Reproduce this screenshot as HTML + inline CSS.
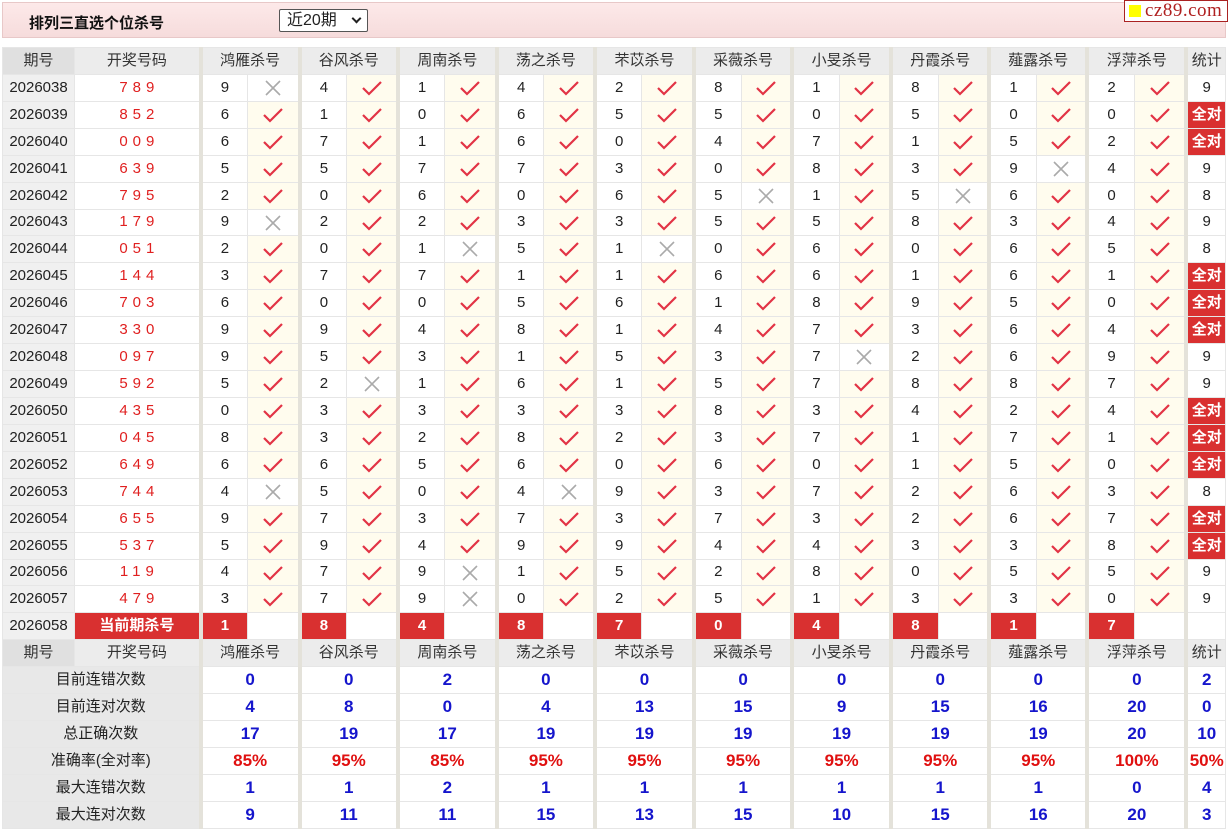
<!DOCTYPE html>
<html><head><meta charset="utf-8">
<style>
*{margin:0;padding:0;box-sizing:border-box}
body{width:1228px;height:828px;overflow:hidden;background:#fff;font-family:"Liberation Sans","Noto Sans CJK SC",sans-serif;color:#222}
.top{position:absolute;left:2px;top:2px;width:1224px;height:36px;background:linear-gradient(#fde9e9,#f6dcdc);border:1px solid #e8c8c8}
.top b{position:absolute;left:26px;top:9px;font-size:15px;color:#111}
.sel{position:absolute;left:276px;top:6px;width:89px;height:23px;border:1px solid #555;background:#fff;font-size:16px;padding-left:7px;line-height:21px;border-radius:2px}
.sel i{position:absolute;right:7px;top:5px;width:7px;height:7px;border-right:2px solid #222;border-bottom:2px solid #222;transform:rotate(45deg)}
.logo{position:absolute;left:1124px;top:0;width:104px;height:22px;background:#fff;border:1px solid #a22;font-family:"Liberation Serif",serif;font-size:19px;color:#b02020;line-height:20px;padding-left:20px;letter-spacing:0.5px}
.logo:before{content:"";position:absolute;left:4px;top:4px;width:12px;height:12px;background:#ff0}
table{position:absolute;left:2px;top:47px;width:1224px;border-collapse:collapse;table-layout:fixed}
td{height:26.93px;border:1px solid #e6e6e6;text-align:center;font-size:15px;padding:0;line-height:24px;white-space:nowrap;overflow:hidden}
tr.h td{background:#ececec;color:#333}
td.q{background:#f0f0f0}
tr.h td.q{background:#e0e0e0}
td.d{color:#e02020;letter-spacing:5px;padding-left:5px}
td.n{border-left:4px solid #e4e2da}
td.g{border-left:4px solid #e4e2da}
td.k{background:#fffcee}
td.k svg,td.x svg{vertical-align:middle}
td.r{background:#d93030;color:#fff;font-weight:bold}
td.L{background:#e8e8e8;color:#222}
td.v{color:#1515cc;font-weight:bold;font-size:17px}
td.p{color:#e01010;font-weight:bold;font-size:17px}
</style></head><body>
<svg width="0" height="0" style="position:absolute"><defs>
<symbol id="c" viewBox="0 0 22 16"><path d="M2 8 L8 14 L20 2" fill="none" stroke="#e23345" stroke-width="2.2"/></symbol>
<symbol id="x" viewBox="0 0 18 18"><path d="M2 2 L16 16 M16 2 L2 16" fill="none" stroke="#aaa" stroke-width="1.6"/></symbol>
</defs></svg>
<div class="top"><b>排列三直选个位杀号</b><div class="sel">近20期<i></i></div></div>
<div class="logo">cz89.com</div>
<table>
<colgroup><col style="width:72px"><col style="width:126px">
<col style="width:47px"><col style="width:52px"><col style="width:47px"><col style="width:51px"><col style="width:47px"><col style="width:52px"><col style="width:47px"><col style="width:51px"><col style="width:47px"><col style="width:52px"><col style="width:47px"><col style="width:51px"><col style="width:47px"><col style="width:52px"><col style="width:47px"><col style="width:51px"><col style="width:47px"><col style="width:51px"><col style="width:47px"><col style="width:52px"><col style="width:39px"></colgroup>
<tr class="h"><td class="q">期号</td><td>开奖号码</td><td colspan="2" class="g">鸿雁杀号</td><td colspan="2" class="g">谷风杀号</td><td colspan="2" class="g">周南杀号</td><td colspan="2" class="g">荡之杀号</td><td colspan="2" class="g">芣苡杀号</td><td colspan="2" class="g">采薇杀号</td><td colspan="2" class="g">小旻杀号</td><td colspan="2" class="g">丹霞杀号</td><td colspan="2" class="g">薤露杀号</td><td colspan="2" class="g">浮萍杀号</td><td class="g">统计</td></tr>
<tr><td class="q">2026038</td><td class="d">789</td><td class="n">9</td><td class="x"><svg width="18" height="18"><use href="#x"/></svg></td><td class="n">4</td><td class="k"><svg width="22" height="16"><use href="#c"/></svg></td><td class="n">1</td><td class="k"><svg width="22" height="16"><use href="#c"/></svg></td><td class="n">4</td><td class="k"><svg width="22" height="16"><use href="#c"/></svg></td><td class="n">2</td><td class="k"><svg width="22" height="16"><use href="#c"/></svg></td><td class="n">8</td><td class="k"><svg width="22" height="16"><use href="#c"/></svg></td><td class="n">1</td><td class="k"><svg width="22" height="16"><use href="#c"/></svg></td><td class="n">8</td><td class="k"><svg width="22" height="16"><use href="#c"/></svg></td><td class="n">1</td><td class="k"><svg width="22" height="16"><use href="#c"/></svg></td><td class="n">2</td><td class="k"><svg width="22" height="16"><use href="#c"/></svg></td><td class="g">9</td></tr>
<tr><td class="q">2026039</td><td class="d">852</td><td class="n">6</td><td class="k"><svg width="22" height="16"><use href="#c"/></svg></td><td class="n">1</td><td class="k"><svg width="22" height="16"><use href="#c"/></svg></td><td class="n">0</td><td class="k"><svg width="22" height="16"><use href="#c"/></svg></td><td class="n">6</td><td class="k"><svg width="22" height="16"><use href="#c"/></svg></td><td class="n">5</td><td class="k"><svg width="22" height="16"><use href="#c"/></svg></td><td class="n">5</td><td class="k"><svg width="22" height="16"><use href="#c"/></svg></td><td class="n">0</td><td class="k"><svg width="22" height="16"><use href="#c"/></svg></td><td class="n">5</td><td class="k"><svg width="22" height="16"><use href="#c"/></svg></td><td class="n">0</td><td class="k"><svg width="22" height="16"><use href="#c"/></svg></td><td class="n">0</td><td class="k"><svg width="22" height="16"><use href="#c"/></svg></td><td class="g r">全对</td></tr>
<tr><td class="q">2026040</td><td class="d">009</td><td class="n">6</td><td class="k"><svg width="22" height="16"><use href="#c"/></svg></td><td class="n">7</td><td class="k"><svg width="22" height="16"><use href="#c"/></svg></td><td class="n">1</td><td class="k"><svg width="22" height="16"><use href="#c"/></svg></td><td class="n">6</td><td class="k"><svg width="22" height="16"><use href="#c"/></svg></td><td class="n">0</td><td class="k"><svg width="22" height="16"><use href="#c"/></svg></td><td class="n">4</td><td class="k"><svg width="22" height="16"><use href="#c"/></svg></td><td class="n">7</td><td class="k"><svg width="22" height="16"><use href="#c"/></svg></td><td class="n">1</td><td class="k"><svg width="22" height="16"><use href="#c"/></svg></td><td class="n">5</td><td class="k"><svg width="22" height="16"><use href="#c"/></svg></td><td class="n">2</td><td class="k"><svg width="22" height="16"><use href="#c"/></svg></td><td class="g r">全对</td></tr>
<tr><td class="q">2026041</td><td class="d">639</td><td class="n">5</td><td class="k"><svg width="22" height="16"><use href="#c"/></svg></td><td class="n">5</td><td class="k"><svg width="22" height="16"><use href="#c"/></svg></td><td class="n">7</td><td class="k"><svg width="22" height="16"><use href="#c"/></svg></td><td class="n">7</td><td class="k"><svg width="22" height="16"><use href="#c"/></svg></td><td class="n">3</td><td class="k"><svg width="22" height="16"><use href="#c"/></svg></td><td class="n">0</td><td class="k"><svg width="22" height="16"><use href="#c"/></svg></td><td class="n">8</td><td class="k"><svg width="22" height="16"><use href="#c"/></svg></td><td class="n">3</td><td class="k"><svg width="22" height="16"><use href="#c"/></svg></td><td class="n">9</td><td class="x"><svg width="18" height="18"><use href="#x"/></svg></td><td class="n">4</td><td class="k"><svg width="22" height="16"><use href="#c"/></svg></td><td class="g">9</td></tr>
<tr><td class="q">2026042</td><td class="d">795</td><td class="n">2</td><td class="k"><svg width="22" height="16"><use href="#c"/></svg></td><td class="n">0</td><td class="k"><svg width="22" height="16"><use href="#c"/></svg></td><td class="n">6</td><td class="k"><svg width="22" height="16"><use href="#c"/></svg></td><td class="n">0</td><td class="k"><svg width="22" height="16"><use href="#c"/></svg></td><td class="n">6</td><td class="k"><svg width="22" height="16"><use href="#c"/></svg></td><td class="n">5</td><td class="x"><svg width="18" height="18"><use href="#x"/></svg></td><td class="n">1</td><td class="k"><svg width="22" height="16"><use href="#c"/></svg></td><td class="n">5</td><td class="x"><svg width="18" height="18"><use href="#x"/></svg></td><td class="n">6</td><td class="k"><svg width="22" height="16"><use href="#c"/></svg></td><td class="n">0</td><td class="k"><svg width="22" height="16"><use href="#c"/></svg></td><td class="g">8</td></tr>
<tr><td class="q">2026043</td><td class="d">179</td><td class="n">9</td><td class="x"><svg width="18" height="18"><use href="#x"/></svg></td><td class="n">2</td><td class="k"><svg width="22" height="16"><use href="#c"/></svg></td><td class="n">2</td><td class="k"><svg width="22" height="16"><use href="#c"/></svg></td><td class="n">3</td><td class="k"><svg width="22" height="16"><use href="#c"/></svg></td><td class="n">3</td><td class="k"><svg width="22" height="16"><use href="#c"/></svg></td><td class="n">5</td><td class="k"><svg width="22" height="16"><use href="#c"/></svg></td><td class="n">5</td><td class="k"><svg width="22" height="16"><use href="#c"/></svg></td><td class="n">8</td><td class="k"><svg width="22" height="16"><use href="#c"/></svg></td><td class="n">3</td><td class="k"><svg width="22" height="16"><use href="#c"/></svg></td><td class="n">4</td><td class="k"><svg width="22" height="16"><use href="#c"/></svg></td><td class="g">9</td></tr>
<tr><td class="q">2026044</td><td class="d">051</td><td class="n">2</td><td class="k"><svg width="22" height="16"><use href="#c"/></svg></td><td class="n">0</td><td class="k"><svg width="22" height="16"><use href="#c"/></svg></td><td class="n">1</td><td class="x"><svg width="18" height="18"><use href="#x"/></svg></td><td class="n">5</td><td class="k"><svg width="22" height="16"><use href="#c"/></svg></td><td class="n">1</td><td class="x"><svg width="18" height="18"><use href="#x"/></svg></td><td class="n">0</td><td class="k"><svg width="22" height="16"><use href="#c"/></svg></td><td class="n">6</td><td class="k"><svg width="22" height="16"><use href="#c"/></svg></td><td class="n">0</td><td class="k"><svg width="22" height="16"><use href="#c"/></svg></td><td class="n">6</td><td class="k"><svg width="22" height="16"><use href="#c"/></svg></td><td class="n">5</td><td class="k"><svg width="22" height="16"><use href="#c"/></svg></td><td class="g">8</td></tr>
<tr><td class="q">2026045</td><td class="d">144</td><td class="n">3</td><td class="k"><svg width="22" height="16"><use href="#c"/></svg></td><td class="n">7</td><td class="k"><svg width="22" height="16"><use href="#c"/></svg></td><td class="n">7</td><td class="k"><svg width="22" height="16"><use href="#c"/></svg></td><td class="n">1</td><td class="k"><svg width="22" height="16"><use href="#c"/></svg></td><td class="n">1</td><td class="k"><svg width="22" height="16"><use href="#c"/></svg></td><td class="n">6</td><td class="k"><svg width="22" height="16"><use href="#c"/></svg></td><td class="n">6</td><td class="k"><svg width="22" height="16"><use href="#c"/></svg></td><td class="n">1</td><td class="k"><svg width="22" height="16"><use href="#c"/></svg></td><td class="n">6</td><td class="k"><svg width="22" height="16"><use href="#c"/></svg></td><td class="n">1</td><td class="k"><svg width="22" height="16"><use href="#c"/></svg></td><td class="g r">全对</td></tr>
<tr><td class="q">2026046</td><td class="d">703</td><td class="n">6</td><td class="k"><svg width="22" height="16"><use href="#c"/></svg></td><td class="n">0</td><td class="k"><svg width="22" height="16"><use href="#c"/></svg></td><td class="n">0</td><td class="k"><svg width="22" height="16"><use href="#c"/></svg></td><td class="n">5</td><td class="k"><svg width="22" height="16"><use href="#c"/></svg></td><td class="n">6</td><td class="k"><svg width="22" height="16"><use href="#c"/></svg></td><td class="n">1</td><td class="k"><svg width="22" height="16"><use href="#c"/></svg></td><td class="n">8</td><td class="k"><svg width="22" height="16"><use href="#c"/></svg></td><td class="n">9</td><td class="k"><svg width="22" height="16"><use href="#c"/></svg></td><td class="n">5</td><td class="k"><svg width="22" height="16"><use href="#c"/></svg></td><td class="n">0</td><td class="k"><svg width="22" height="16"><use href="#c"/></svg></td><td class="g r">全对</td></tr>
<tr><td class="q">2026047</td><td class="d">330</td><td class="n">9</td><td class="k"><svg width="22" height="16"><use href="#c"/></svg></td><td class="n">9</td><td class="k"><svg width="22" height="16"><use href="#c"/></svg></td><td class="n">4</td><td class="k"><svg width="22" height="16"><use href="#c"/></svg></td><td class="n">8</td><td class="k"><svg width="22" height="16"><use href="#c"/></svg></td><td class="n">1</td><td class="k"><svg width="22" height="16"><use href="#c"/></svg></td><td class="n">4</td><td class="k"><svg width="22" height="16"><use href="#c"/></svg></td><td class="n">7</td><td class="k"><svg width="22" height="16"><use href="#c"/></svg></td><td class="n">3</td><td class="k"><svg width="22" height="16"><use href="#c"/></svg></td><td class="n">6</td><td class="k"><svg width="22" height="16"><use href="#c"/></svg></td><td class="n">4</td><td class="k"><svg width="22" height="16"><use href="#c"/></svg></td><td class="g r">全对</td></tr>
<tr><td class="q">2026048</td><td class="d">097</td><td class="n">9</td><td class="k"><svg width="22" height="16"><use href="#c"/></svg></td><td class="n">5</td><td class="k"><svg width="22" height="16"><use href="#c"/></svg></td><td class="n">3</td><td class="k"><svg width="22" height="16"><use href="#c"/></svg></td><td class="n">1</td><td class="k"><svg width="22" height="16"><use href="#c"/></svg></td><td class="n">5</td><td class="k"><svg width="22" height="16"><use href="#c"/></svg></td><td class="n">3</td><td class="k"><svg width="22" height="16"><use href="#c"/></svg></td><td class="n">7</td><td class="x"><svg width="18" height="18"><use href="#x"/></svg></td><td class="n">2</td><td class="k"><svg width="22" height="16"><use href="#c"/></svg></td><td class="n">6</td><td class="k"><svg width="22" height="16"><use href="#c"/></svg></td><td class="n">9</td><td class="k"><svg width="22" height="16"><use href="#c"/></svg></td><td class="g">9</td></tr>
<tr><td class="q">2026049</td><td class="d">592</td><td class="n">5</td><td class="k"><svg width="22" height="16"><use href="#c"/></svg></td><td class="n">2</td><td class="x"><svg width="18" height="18"><use href="#x"/></svg></td><td class="n">1</td><td class="k"><svg width="22" height="16"><use href="#c"/></svg></td><td class="n">6</td><td class="k"><svg width="22" height="16"><use href="#c"/></svg></td><td class="n">1</td><td class="k"><svg width="22" height="16"><use href="#c"/></svg></td><td class="n">5</td><td class="k"><svg width="22" height="16"><use href="#c"/></svg></td><td class="n">7</td><td class="k"><svg width="22" height="16"><use href="#c"/></svg></td><td class="n">8</td><td class="k"><svg width="22" height="16"><use href="#c"/></svg></td><td class="n">8</td><td class="k"><svg width="22" height="16"><use href="#c"/></svg></td><td class="n">7</td><td class="k"><svg width="22" height="16"><use href="#c"/></svg></td><td class="g">9</td></tr>
<tr><td class="q">2026050</td><td class="d">435</td><td class="n">0</td><td class="k"><svg width="22" height="16"><use href="#c"/></svg></td><td class="n">3</td><td class="k"><svg width="22" height="16"><use href="#c"/></svg></td><td class="n">3</td><td class="k"><svg width="22" height="16"><use href="#c"/></svg></td><td class="n">3</td><td class="k"><svg width="22" height="16"><use href="#c"/></svg></td><td class="n">3</td><td class="k"><svg width="22" height="16"><use href="#c"/></svg></td><td class="n">8</td><td class="k"><svg width="22" height="16"><use href="#c"/></svg></td><td class="n">3</td><td class="k"><svg width="22" height="16"><use href="#c"/></svg></td><td class="n">4</td><td class="k"><svg width="22" height="16"><use href="#c"/></svg></td><td class="n">2</td><td class="k"><svg width="22" height="16"><use href="#c"/></svg></td><td class="n">4</td><td class="k"><svg width="22" height="16"><use href="#c"/></svg></td><td class="g r">全对</td></tr>
<tr><td class="q">2026051</td><td class="d">045</td><td class="n">8</td><td class="k"><svg width="22" height="16"><use href="#c"/></svg></td><td class="n">3</td><td class="k"><svg width="22" height="16"><use href="#c"/></svg></td><td class="n">2</td><td class="k"><svg width="22" height="16"><use href="#c"/></svg></td><td class="n">8</td><td class="k"><svg width="22" height="16"><use href="#c"/></svg></td><td class="n">2</td><td class="k"><svg width="22" height="16"><use href="#c"/></svg></td><td class="n">3</td><td class="k"><svg width="22" height="16"><use href="#c"/></svg></td><td class="n">7</td><td class="k"><svg width="22" height="16"><use href="#c"/></svg></td><td class="n">1</td><td class="k"><svg width="22" height="16"><use href="#c"/></svg></td><td class="n">7</td><td class="k"><svg width="22" height="16"><use href="#c"/></svg></td><td class="n">1</td><td class="k"><svg width="22" height="16"><use href="#c"/></svg></td><td class="g r">全对</td></tr>
<tr><td class="q">2026052</td><td class="d">649</td><td class="n">6</td><td class="k"><svg width="22" height="16"><use href="#c"/></svg></td><td class="n">6</td><td class="k"><svg width="22" height="16"><use href="#c"/></svg></td><td class="n">5</td><td class="k"><svg width="22" height="16"><use href="#c"/></svg></td><td class="n">6</td><td class="k"><svg width="22" height="16"><use href="#c"/></svg></td><td class="n">0</td><td class="k"><svg width="22" height="16"><use href="#c"/></svg></td><td class="n">6</td><td class="k"><svg width="22" height="16"><use href="#c"/></svg></td><td class="n">0</td><td class="k"><svg width="22" height="16"><use href="#c"/></svg></td><td class="n">1</td><td class="k"><svg width="22" height="16"><use href="#c"/></svg></td><td class="n">5</td><td class="k"><svg width="22" height="16"><use href="#c"/></svg></td><td class="n">0</td><td class="k"><svg width="22" height="16"><use href="#c"/></svg></td><td class="g r">全对</td></tr>
<tr><td class="q">2026053</td><td class="d">744</td><td class="n">4</td><td class="x"><svg width="18" height="18"><use href="#x"/></svg></td><td class="n">5</td><td class="k"><svg width="22" height="16"><use href="#c"/></svg></td><td class="n">0</td><td class="k"><svg width="22" height="16"><use href="#c"/></svg></td><td class="n">4</td><td class="x"><svg width="18" height="18"><use href="#x"/></svg></td><td class="n">9</td><td class="k"><svg width="22" height="16"><use href="#c"/></svg></td><td class="n">3</td><td class="k"><svg width="22" height="16"><use href="#c"/></svg></td><td class="n">7</td><td class="k"><svg width="22" height="16"><use href="#c"/></svg></td><td class="n">2</td><td class="k"><svg width="22" height="16"><use href="#c"/></svg></td><td class="n">6</td><td class="k"><svg width="22" height="16"><use href="#c"/></svg></td><td class="n">3</td><td class="k"><svg width="22" height="16"><use href="#c"/></svg></td><td class="g">8</td></tr>
<tr><td class="q">2026054</td><td class="d">655</td><td class="n">9</td><td class="k"><svg width="22" height="16"><use href="#c"/></svg></td><td class="n">7</td><td class="k"><svg width="22" height="16"><use href="#c"/></svg></td><td class="n">3</td><td class="k"><svg width="22" height="16"><use href="#c"/></svg></td><td class="n">7</td><td class="k"><svg width="22" height="16"><use href="#c"/></svg></td><td class="n">3</td><td class="k"><svg width="22" height="16"><use href="#c"/></svg></td><td class="n">7</td><td class="k"><svg width="22" height="16"><use href="#c"/></svg></td><td class="n">3</td><td class="k"><svg width="22" height="16"><use href="#c"/></svg></td><td class="n">2</td><td class="k"><svg width="22" height="16"><use href="#c"/></svg></td><td class="n">6</td><td class="k"><svg width="22" height="16"><use href="#c"/></svg></td><td class="n">7</td><td class="k"><svg width="22" height="16"><use href="#c"/></svg></td><td class="g r">全对</td></tr>
<tr><td class="q">2026055</td><td class="d">537</td><td class="n">5</td><td class="k"><svg width="22" height="16"><use href="#c"/></svg></td><td class="n">9</td><td class="k"><svg width="22" height="16"><use href="#c"/></svg></td><td class="n">4</td><td class="k"><svg width="22" height="16"><use href="#c"/></svg></td><td class="n">9</td><td class="k"><svg width="22" height="16"><use href="#c"/></svg></td><td class="n">9</td><td class="k"><svg width="22" height="16"><use href="#c"/></svg></td><td class="n">4</td><td class="k"><svg width="22" height="16"><use href="#c"/></svg></td><td class="n">4</td><td class="k"><svg width="22" height="16"><use href="#c"/></svg></td><td class="n">3</td><td class="k"><svg width="22" height="16"><use href="#c"/></svg></td><td class="n">3</td><td class="k"><svg width="22" height="16"><use href="#c"/></svg></td><td class="n">8</td><td class="k"><svg width="22" height="16"><use href="#c"/></svg></td><td class="g r">全对</td></tr>
<tr><td class="q">2026056</td><td class="d">119</td><td class="n">4</td><td class="k"><svg width="22" height="16"><use href="#c"/></svg></td><td class="n">7</td><td class="k"><svg width="22" height="16"><use href="#c"/></svg></td><td class="n">9</td><td class="x"><svg width="18" height="18"><use href="#x"/></svg></td><td class="n">1</td><td class="k"><svg width="22" height="16"><use href="#c"/></svg></td><td class="n">5</td><td class="k"><svg width="22" height="16"><use href="#c"/></svg></td><td class="n">2</td><td class="k"><svg width="22" height="16"><use href="#c"/></svg></td><td class="n">8</td><td class="k"><svg width="22" height="16"><use href="#c"/></svg></td><td class="n">0</td><td class="k"><svg width="22" height="16"><use href="#c"/></svg></td><td class="n">5</td><td class="k"><svg width="22" height="16"><use href="#c"/></svg></td><td class="n">5</td><td class="k"><svg width="22" height="16"><use href="#c"/></svg></td><td class="g">9</td></tr>
<tr><td class="q">2026057</td><td class="d">479</td><td class="n">3</td><td class="k"><svg width="22" height="16"><use href="#c"/></svg></td><td class="n">7</td><td class="k"><svg width="22" height="16"><use href="#c"/></svg></td><td class="n">9</td><td class="x"><svg width="18" height="18"><use href="#x"/></svg></td><td class="n">0</td><td class="k"><svg width="22" height="16"><use href="#c"/></svg></td><td class="n">2</td><td class="k"><svg width="22" height="16"><use href="#c"/></svg></td><td class="n">5</td><td class="k"><svg width="22" height="16"><use href="#c"/></svg></td><td class="n">1</td><td class="k"><svg width="22" height="16"><use href="#c"/></svg></td><td class="n">3</td><td class="k"><svg width="22" height="16"><use href="#c"/></svg></td><td class="n">3</td><td class="k"><svg width="22" height="16"><use href="#c"/></svg></td><td class="n">0</td><td class="k"><svg width="22" height="16"><use href="#c"/></svg></td><td class="g">9</td></tr>
<tr><td class="q">2026058</td><td class="r">当前期杀号</td><td class="n r">1</td><td></td><td class="n r">8</td><td></td><td class="n r">4</td><td></td><td class="n r">8</td><td></td><td class="n r">7</td><td></td><td class="n r">0</td><td></td><td class="n r">4</td><td></td><td class="n r">8</td><td></td><td class="n r">1</td><td></td><td class="n r">7</td><td></td><td class="g"></td></tr>
<tr class="h"><td class="q">期号</td><td>开奖号码</td><td colspan="2" class="g">鸿雁杀号</td><td colspan="2" class="g">谷风杀号</td><td colspan="2" class="g">周南杀号</td><td colspan="2" class="g">荡之杀号</td><td colspan="2" class="g">芣苡杀号</td><td colspan="2" class="g">采薇杀号</td><td colspan="2" class="g">小旻杀号</td><td colspan="2" class="g">丹霞杀号</td><td colspan="2" class="g">薤露杀号</td><td colspan="2" class="g">浮萍杀号</td><td class="g">统计</td></tr>
<tr><td colspan="2" class="L">目前连错次数</td><td colspan="2" class="g v">0</td><td colspan="2" class="g v">0</td><td colspan="2" class="g v">2</td><td colspan="2" class="g v">0</td><td colspan="2" class="g v">0</td><td colspan="2" class="g v">0</td><td colspan="2" class="g v">0</td><td colspan="2" class="g v">0</td><td colspan="2" class="g v">0</td><td colspan="2" class="g v">0</td><td class="g v">2</td></tr>
<tr><td colspan="2" class="L">目前连对次数</td><td colspan="2" class="g v">4</td><td colspan="2" class="g v">8</td><td colspan="2" class="g v">0</td><td colspan="2" class="g v">4</td><td colspan="2" class="g v">13</td><td colspan="2" class="g v">15</td><td colspan="2" class="g v">9</td><td colspan="2" class="g v">15</td><td colspan="2" class="g v">16</td><td colspan="2" class="g v">20</td><td class="g v">0</td></tr>
<tr><td colspan="2" class="L">总正确次数</td><td colspan="2" class="g v">17</td><td colspan="2" class="g v">19</td><td colspan="2" class="g v">17</td><td colspan="2" class="g v">19</td><td colspan="2" class="g v">19</td><td colspan="2" class="g v">19</td><td colspan="2" class="g v">19</td><td colspan="2" class="g v">19</td><td colspan="2" class="g v">19</td><td colspan="2" class="g v">20</td><td class="g v">10</td></tr>
<tr><td colspan="2" class="L">准确率(全对率)</td><td colspan="2" class="g p">85%</td><td colspan="2" class="g p">95%</td><td colspan="2" class="g p">85%</td><td colspan="2" class="g p">95%</td><td colspan="2" class="g p">95%</td><td colspan="2" class="g p">95%</td><td colspan="2" class="g p">95%</td><td colspan="2" class="g p">95%</td><td colspan="2" class="g p">95%</td><td colspan="2" class="g p">100%</td><td class="g p">50%</td></tr>
<tr><td colspan="2" class="L">最大连错次数</td><td colspan="2" class="g v">1</td><td colspan="2" class="g v">1</td><td colspan="2" class="g v">2</td><td colspan="2" class="g v">1</td><td colspan="2" class="g v">1</td><td colspan="2" class="g v">1</td><td colspan="2" class="g v">1</td><td colspan="2" class="g v">1</td><td colspan="2" class="g v">1</td><td colspan="2" class="g v">0</td><td class="g v">4</td></tr>
<tr><td colspan="2" class="L">最大连对次数</td><td colspan="2" class="g v">9</td><td colspan="2" class="g v">11</td><td colspan="2" class="g v">11</td><td colspan="2" class="g v">15</td><td colspan="2" class="g v">13</td><td colspan="2" class="g v">15</td><td colspan="2" class="g v">10</td><td colspan="2" class="g v">15</td><td colspan="2" class="g v">16</td><td colspan="2" class="g v">20</td><td class="g v">3</td></tr>
</table>
</body></html>
